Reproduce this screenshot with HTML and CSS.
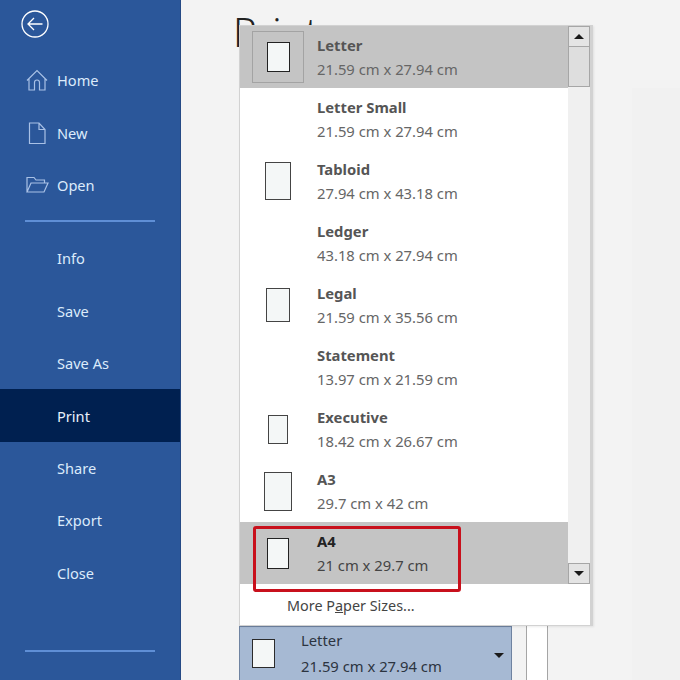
FILE: index.html
```html
<!DOCTYPE html>
<html lang="en">
<head>
  <meta charset="UTF-8">
  <meta name="viewport" content="width=device-width, initial-scale=1.0">
  <title>Print</title>
  <link rel="stylesheet" href="styles.css">
</head>
<body>

  <div class="app">
    <nav class="sidebar">
      <button class="back" aria-label="Back">
        <svg width="30" height="30" viewBox="0 0 30 30" fill="none" stroke="#fff" stroke-width="1.3">
          <circle cx="15" cy="15" r="13"/>
          <path d="M22.5 15H8M14 9l-6 6 6 6"/>
        </svg>
      </button>

      <ul class="menu">
        <li class="menu-item">
          <svg class="menu-icon" width="24" height="24" viewBox="0 0 24 24" fill="none" stroke="#a9c1e6" stroke-width="1.2">
            <path d="M2 12.5 12 2.5l10 10M4 10.5V22h5.5v-7.5a2.5 2.5 0 0 1 5 0V22H20V10.500"/>
          </svg>
          Home
        </li>
        <li class="menu-item">
          <svg class="menu-icon" width="24" height="24" viewBox="0 0 24 24" fill="none" stroke="#a9c1e6" stroke-width="1.2">
            <path d="M4.500 2h9.500l6 6.500V22.500H4.500zM14 2v6.500h6"/>
          </svg>
          New
        </li>
        <li class="menu-item">
          <svg class="menu-icon" width="24" height="24" viewBox="0 0 24 24" fill="none" stroke="#a9c1e6" stroke-width="1.200">
            <path d="M2 19V4.500h7l2 2.500h8.500v3M2 19l4-9h17l-4 9z"/>
          </svg>
          Open
        </li>
      </ul>

      <hr class="menu-line">

      <ul class="menu">
        <li class="menu-item indent">Info</li>
        <li class="menu-item indent">Save</li>
        <li class="menu-item indent">Save As</li>
        <li class="menu-item indent active">Print</li>
        <li class="menu-item indent">Share</li>
        <li class="menu-item indent">Export</li>
        <li class="menu-item indent">Close</li>
      </ul>

      <hr class="menu-line bottom">
    </nav>

    <main class="content">
      <h1 class="title">Print</h1>

      <div class="side-panel"></div>

      <div class="paper-select">
        <div class="page page-select"></div>
        <div class="paper-text">
          <div>Letter</div>
          <div>21.59 cm x 27.94 cm</div>
        </div>
        <span class="arrow-down"></span>
      </div>
      <div class="scroll-stub"></div>

      <div class="popup">
        <div class="popup-body">
          <ul class="paper-list">
            <li class="paper selected">
              <div class="paper-icon current"><div class="page page-letter"></div></div>
              <div><strong>Letter</strong><span>21.59 cm x 27.94 cm</span></div>
            </li>
            <li class="paper">
              <div class="paper-icon"></div>
              <div><strong>Letter Small</strong><span>21.59 cm x 27.94 cm</span></div>
            </li>
            <li class="paper">
              <div class="paper-icon"><div class="page page-tabloid"></div></div>
              <div><strong>Tabloid</strong><span>27.94 cm x 43.18 cm</span></div>
            </li>
            <li class="paper">
              <div class="paper-icon"></div>
              <div><strong>Ledger</strong><span>43.18 cm x 27.94 cm</span></div>
            </li>
            <li class="paper">
              <div class="paper-icon"><div class="page page-legal"></div></div>
              <div><strong>Legal</strong><span>21.59 cm x 35.56 cm</span></div>
            </li>
            <li class="paper">
              <div class="paper-icon"></div>
              <div><strong>Statement</strong><span>13.97 cm x 21.59 cm</span></div>
            </li>
            <li class="paper">
              <div class="paper-icon"><div class="page page-executive"></div></div>
              <div><strong>Executive</strong><span>18.42 cm x 26.67 cm</span></div>
            </li>
            <li class="paper">
              <div class="paper-icon"><div class="page page-a3"></div></div>
              <div><strong>A3</strong><span>29.7 cm x 42 cm</span></div>
            </li>
            <li class="paper selected">
              <div class="paper-icon"><div class="page page-a4"></div></div>
              <div><strong class="dark">A4</strong><span class="dark">21 cm x 29.7 cm</span></div>
            </li>
          </ul>

          <div class="scrollbar">
            <div class="scroll-btn"><span class="arrow-up"></span></div>
            <div class="scroll-thumb"></div>
            <div class="scroll-track"></div>
            <div class="scroll-btn"><span class="arrow-down"></span></div>
          </div>
        </div>

        <div class="more">More P<u>a</u>per Sizes...</div>
        <div class="red-box"></div>
      </div>
    </main>
  </div>

</body>
</html>
```

FILE: styles.css
```css
* {
  box-sizing: border-box;
}

html,
body {
  margin: 0;
  padding: 0;
}

body {
  font-family: "Noto Sans", "Open Sans", sans-serif;
  background-color: #f3f3f3;
}

ul {
  list-style-type: none;
  margin: 0;
  padding: 0;
}

.app {
  display: flex;
  width: 680px;
  height: 680px;
  overflow: hidden;
}

/* left backstage menu */
.sidebar {
  width: 181px;
  flex-shrink: 0;
  background-color: #2b579a;
  border-right: 1px solid #254a85;
  padding-top: 9px;
}

.back {
  display: block;
  width: 30px;
  height: 30px;
  margin-left: 20px;
  padding: 0;
  background: none;
  border: none;
}

.back svg {
  display: block;
}

.menu-item {
  display: flex;
  align-items: center;
  height: 52.4px;
  padding-left: 25px;
  gap: 8px;
  font-size: 14.6px;
  color: #dcebfb;
}

.sidebar > .menu:first-of-type {
  margin-top: 15px;
}

.menu-item.indent {
  padding-left: 57px;
}

.menu-item.active {
  background-color: #002050;
  color: #e8f0fb;
}

.menu-line {
  width: 130px;
  height: 2px;
  margin: 9px 0 10px 25px;
  border: none;
  background-color: #5f8fd6;
}

.menu-line.bottom {
  margin-top: 51px;
}

/* print area */
.content {
  position: relative;
  flex: 1;
  padding: 0 0 0 53px;
}

.title {
  margin: 0;
  position: absolute;
  top: 4px;
  left: 52px;
  font-size: 40px;
  font-weight: 300;
  color: #222;
}

.side-panel {
  position: absolute;
  top: 88px;
  left: 451px;
  width: 48px;
  height: 592px;
  background-color: #f1f1f1;
}

.paper-select {
  position: absolute;
  top: 626px;
  left: 58px;
  width: 273px;
  height: 54px;
  display: flex;
  align-items: flex-start;
  padding: 12px 0 0 12px;
  background-color: #a6b9d3;
  border: 1px solid #6f83a1;
  border-bottom: none;
}

.paper-text {
  margin-left: 26px;
  margin-top: -12px;
  font-size: 14.8px;
  line-height: 26px;
  color: #2c3440;
  flex: 1;
}

.paper-select .arrow-down {
  margin: 14px 7px 0 0;
}

.scroll-stub {
  position: absolute;
  top: 626px;
  left: 345px;
  width: 22px;
  height: 54px;
  background-color: #fff;
  border-left: 1px solid #a5a5a5;
  border-right: 1px solid #a5a5a5;
}

.page {
  background-color: #f4f7f7;
  border: 1px solid #444;
}

.page-select {
  width: 23px;
  height: 29px;
  border-color: #2b2b2b;
  flex-shrink: 0;
}

.page-letter {
  width: 23px;
  height: 30px;
  border: 1.5px solid #222;
}

.page-tabloid {
  width: 26px;
  height: 38px;
}

.page-legal {
  width: 24px;
  height: 34px;
}

.page-executive {
  width: 20px;
  height: 29px;
}

.page-a3 {
  width: 28px;
  height: 39px;
}

.page-a4 {
  width: 22px;
  height: 31px;
  border-color: #222;
}

/* paper size dropdown */
.popup {
  position: absolute;
  top: 25px;
  left: 58px;
  width: 354px;
  height: 601px;
  background-color: #fff;
  border: 1px solid #d2d2d2;
  border-right-width: 3px;
  box-shadow: 1px 1px 2px rgba(0, 0, 0, 0.08);
}

.popup-body {
  display: flex;
  height: 558px;
}

.paper-list {
  width: 329px;
}

.paper {
  display: flex;
  height: 62px;
  align-items: center;
  font-size: 14.8px;
  color: #666;
}

.paper.selected {
  background-color: #c4c4c4;
}

.paper strong {
  display: block;
  line-height: 24px;
  font-weight: 700;
  color: #555;
}

.paper span {
  display: block;
  line-height: 24px;
}

.paper strong.dark {
  color: #222;
}

.paper span.dark {
  color: #444;
}

.paper-icon {
  width: 52px;
  height: 52px;
  margin: 0 13px 0 12px;
  display: flex;
  align-items: center;
  justify-content: center;
  flex-shrink: 0;
}

.paper-icon.current {
  border: 1px solid #a3a3a3;
}

.scrollbar {
  width: 22px;
  display: flex;
  flex-direction: column;
  background-color: #f0f0f0;
}

.scroll-btn {
  height: 21px;
  display: flex;
  align-items: center;
  justify-content: center;
  background-color: #e4e4e4;
  border: 1px solid #a6a6a6;
  flex-shrink: 0;
}

.scroll-thumb {
  height: 40px;
  background-color: #dedede;
  border: 1px solid #a6a6a6;
  border-top: none;
}

.scroll-track {
  flex: 1;
}

.arrow-up,
.arrow-down {
  width: 0;
  height: 0;
  border-left: 5px solid transparent;
  border-right: 5px solid transparent;
}

.arrow-up {
  border-bottom: 5px solid #1a1a1a;
}

.arrow-down {
  border-top: 5px solid #1a1a1a;
}

.more {
  height: 42px;
  padding-left: 47px;
  font-size: 14.4px;
  line-height: 44px;
  color: #444;
}

.red-box {
  position: absolute;
  top: 500px;
  left: 13px;
  width: 208px;
  height: 66px;
  border: 3px solid #c8101c;
  border-radius: 3px;
}
```
